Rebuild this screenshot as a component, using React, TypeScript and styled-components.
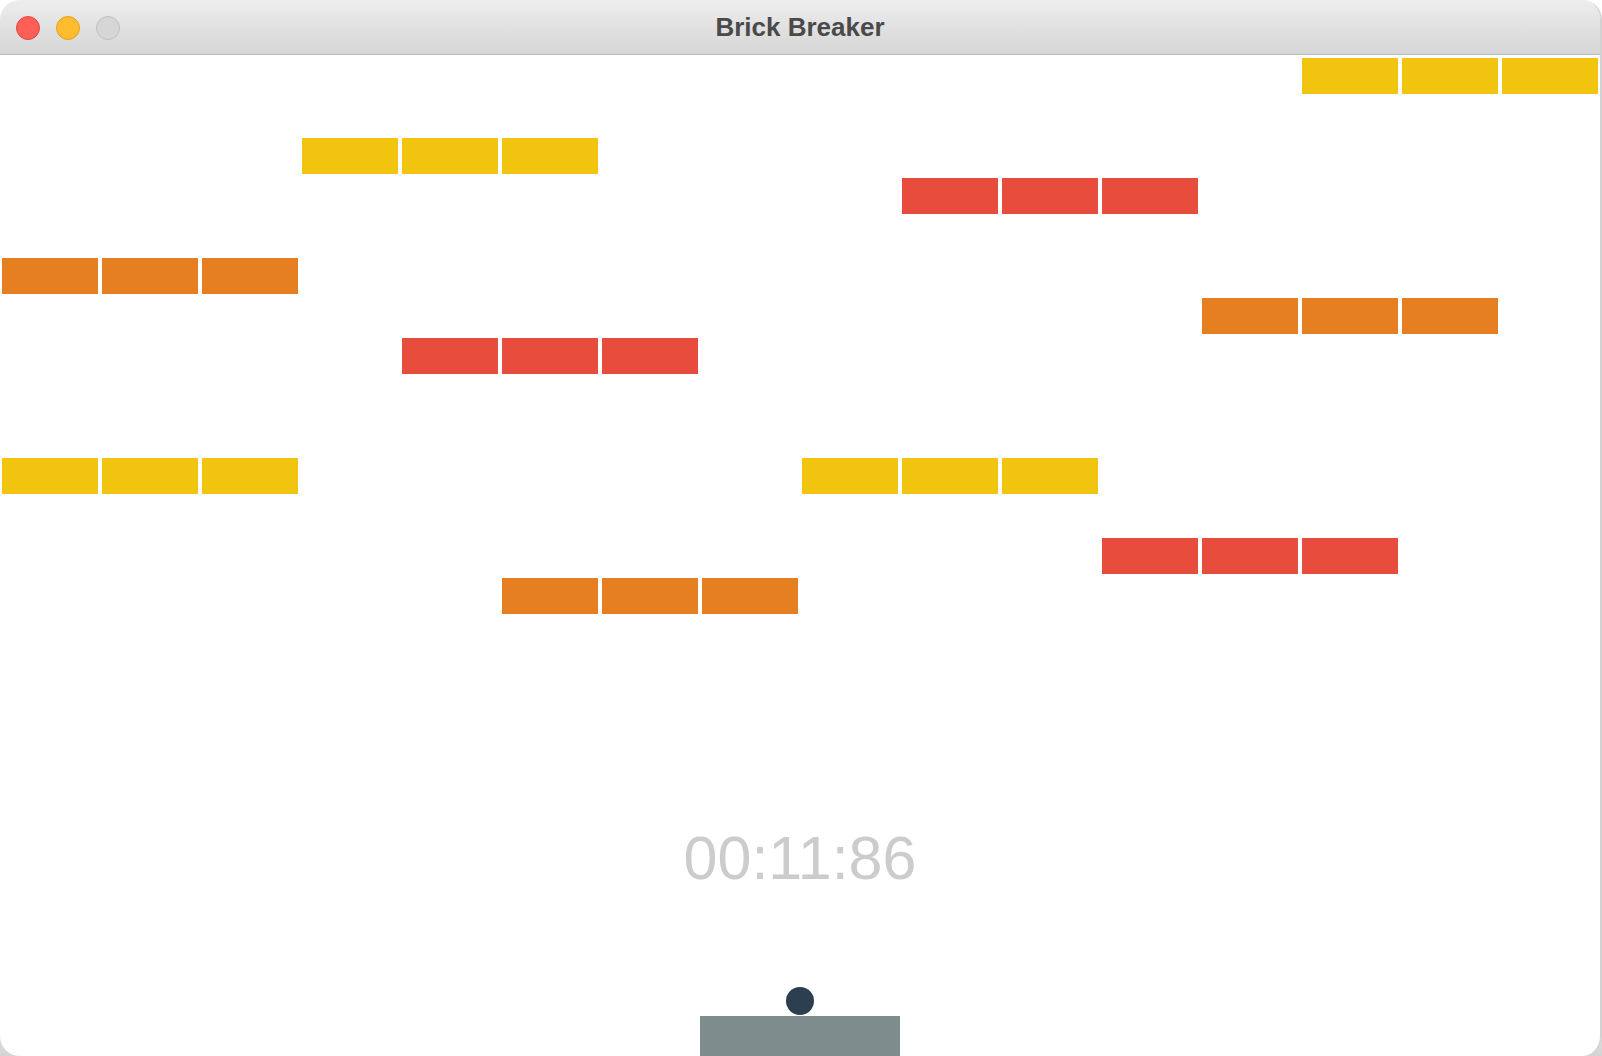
import React from "react";
import styled, { createGlobalStyle } from "styled-components";

const GlobalStyle = createGlobalStyle`
  html, body {
    margin: 0;
    padding: 0;
    background: linear-gradient(to bottom, #ffffff 0, #ffffff 960px, #d4d4d4 1056px);
    overflow: hidden;
  }
  * { box-sizing: border-box; }
`;

const Window = styled.div`
  width: 1602px;
  height: 1056px;
  border-radius: 20px;
  overflow: hidden;
  background: #ffffff;
  display: flex;
  flex-direction: column;
  border-right: 2px solid #d2d2d2;
`;

const TitleBar = styled.div`
  height: 55px;
  flex: 0 0 55px;
  background: linear-gradient(to bottom, #ededed, #d6d6d6);
  border-bottom: 1px solid #b9b9b9;
  position: relative;
  display: flex;
  align-items: center;
  justify-content: center;
`;

const Lights = styled.div`
  position: absolute;
  left: 16px;
  top: 16px;
  display: flex;
  gap: 16px;
`;

const Light = styled.div<{ $fill: string; $edge: string }>`
  width: 24px;
  height: 24px;
  border-radius: 50%;
  background: ${(p) => p.$fill};
  border: 1px solid ${(p) => p.$edge};
`;

const Title = styled.div`
  font-family: "Liberation Sans", Arial, sans-serif;
  font-weight: bold;
  font-size: 26px;
  color: #4a4a4a;
  line-height: 1;
  margin-top: -1px;
`;

const GameArea = styled.div`
  position: relative;
  flex: 1;
  padding: 3px 0 0 2px;
`;

const BrickGrid = styled.div`
  display: grid;
  grid-template-columns: repeat(16, 96px);
  grid-template-rows: repeat(14, 36px);
  column-gap: 4px;
  row-gap: 4px;
`;

const Brick = styled.div<{ $color: string; $row: number; $col: number }>`
  background: ${(p) => p.$color};
  grid-row: ${(p) => p.$row + 1};
  grid-column: ${(p) => p.$col + 1};
`;

const Timer = styled.div`
  position: absolute;
  left: 0;
  right: 0;
  top: 773px;
  text-align: center;
  font-family: "Liberation Sans", Arial, sans-serif;
  font-size: 61px;
  line-height: 1;
  color: #cccccc;
`;

const Ball = styled.div`
  position: absolute;
  left: 786px;
  top: 932px;
  width: 28px;
  height: 28px;
  border-radius: 50%;
  background: #2c3e50;
`;

const Paddle = styled.div`
  position: absolute;
  left: 700px;
  top: 961px;
  width: 200px;
  height: 40px;
  background: #7f8c8d;
`;

const YELLOW = "#f1c40f";
const ORANGE = "#e67e22";
const RED = "#e74c3c";

const groups: { row: number; col: number; color: string }[] = [
  { row: 0, col: 13, color: YELLOW },
  { row: 2, col: 3, color: YELLOW },
  { row: 3, col: 9, color: RED },
  { row: 5, col: 0, color: ORANGE },
  { row: 6, col: 12, color: ORANGE },
  { row: 7, col: 4, color: RED },
  { row: 10, col: 0, color: YELLOW },
  { row: 10, col: 8, color: YELLOW },
  { row: 12, col: 11, color: RED },
  { row: 13, col: 5, color: ORANGE },
];

const bricks = groups.flatMap((g) =>
  [0, 1, 2].map((i) => ({ row: g.row, col: g.col + i, color: g.color }))
);

export default function App() {
  return (
    <>
      <GlobalStyle />
      <Window>
        <TitleBar>
          <Lights>
            <Light $fill="#ff5f57" $edge="#e2463f" />
            <Light $fill="#febc2e" $edge="#dea123" />
            <Light $fill="#d6d6d6" $edge="#bfbfbf" />
          </Lights>
          <Title>Brick Breaker</Title>
        </TitleBar>
        <GameArea>
          <BrickGrid>
            {bricks.map((b, i) => (
              <Brick key={i} $row={b.row} $col={b.col} $color={b.color} />
            ))}
          </BrickGrid>
          <Timer>00:11:86</Timer>
          <Ball />
          <Paddle />
        </GameArea>
      </Window>
    </>
  );
}
